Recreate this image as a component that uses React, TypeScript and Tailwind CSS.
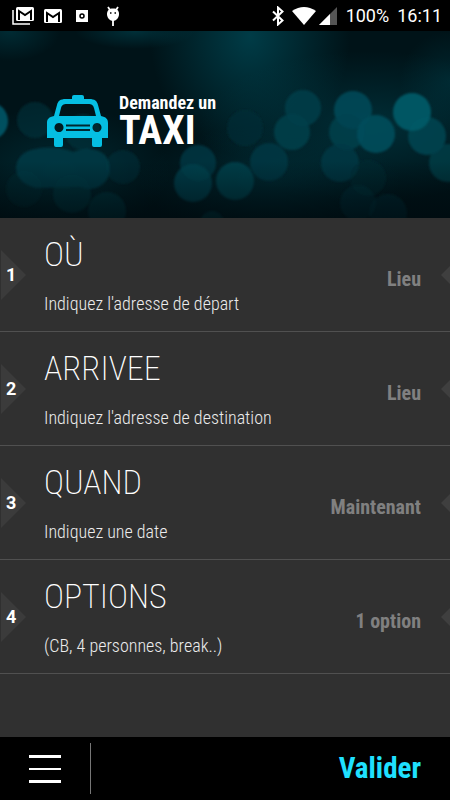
import clsx from "clsx";

const condensed =
  "font-['Roboto_Condensed','Liberation_Sans_Narrow','Liberation_Sans',sans-serif]";

const steps = [
  { title: "OÙ", hint: "Indiquez l'adresse de départ", value: "Lieu" },
  { title: "ARRIVEE", hint: "Indiquez l'adresse de destination", value: "Lieu" },
  { title: "QUAND", hint: "Indiquez une date", value: "Maintenant" },
  { title: "OPTIONS", hint: "(CB, 4 personnes, break..)", value: "1 option" },
];

// cx, cy, radius, colour, opacity
const lights: [number, number, number, string, number][] = [
  [-11, 90, 19, "#006477", 0.75],
  [35, 89, 18, "#003943", 0.5],
  [83, 101, 18, "#003943", 0.5],
  [123, 136, 17, "#003540", 0.45],
  [72, 163, 19, "#003540", 0.6],
  [24, 158, 18, "#002f38", 0.4],
  [107, 180, 19, "#003540", 0.6],
  [198, 132, 18, "#003d49", 0.7],
  [193, 152, 19, "#00424f", 0.8],
  [235, 150, 19, "#004350", 0.8],
  [245, 97, 18, "#002e37", 0.6],
  [269, 131, 19, "#003a45", 0.75],
  [303, 77, 18, "#00414e", 0.75],
  [292, 101, 18, "#003f4b", 0.85],
  [353, 79, 19, "#004b59", 0.85],
  [347, 101, 18, "#004350", 0.75],
  [376, 103, 19, "#004d5b", 0.9],
  [340, 132, 19, "#003a45", 0.75],
  [368, 147, 18, "#002f38", 0.45],
  [358, 172, 18, "#00323b", 0.5],
  [388, 182, 19, "#00323b", 0.5],
  [427, 105, 19, "#004451", 0.85],
  [412, 81, 19, "#005866", 0.95],
  [448, 132, 19, "#00414d", 0.7],
  [212, 192, 12, "#00404b", 0.5],
];

function Bokeh() {
  return (
    <svg
      className="absolute inset-0 size-full"
      viewBox="0 0 450 187"
      preserveAspectRatio="xMidYMid slice"
      aria-hidden="true"
    >
      <defs>
        <radialGradient id="glow">
          <stop offset="0" stopColor="#00434f" />
          <stop offset="1" stopColor="#00434f" stopOpacity="0" />
        </radialGradient>
        <linearGradient id="floor" x1="0" y1="0" x2="0" y2="1">
          <stop offset="0" stopColor="#00080c" stopOpacity="0" />
          <stop offset="1" stopColor="#00080c" stopOpacity="0.6" />
        </linearGradient>
        <filter id="soft">
          <feGaussianBlur stdDeviation="0.8" />
        </filter>
      </defs>
      <rect width="450" height="187" fill="#001318" />
      <ellipse cx="250" cy="5" rx="100" ry="120" fill="url(#glow)" opacity="0.85" />
      <ellipse cx="135" cy="0" rx="60" ry="18" fill="url(#glow)" opacity="0.6" />
      <ellipse cx="10" cy="0" rx="50" ry="30" fill="url(#glow)" opacity="0.5" />
      <ellipse cx="370" cy="95" rx="170" ry="75" fill="url(#glow)" opacity="0.55" />
      <ellipse cx="450" cy="50" rx="50" ry="50" fill="url(#glow)" opacity="0.4" />
      <ellipse cx="270" cy="150" rx="130" ry="55" fill="url(#glow)" opacity="0.4" />
      <ellipse cx="60" cy="140" rx="110" ry="65" fill="url(#glow)" opacity="0.45" />
      <g filter="url(#soft)">
        {lights.map(([cx, cy, r, fill, opacity]) => (
          <circle key={`${cx}-${cy}`} cx={cx} cy={cy} r={r} fill={fill} opacity={opacity} />
        ))}
        <path
          d="M35 118 Q55 114 73 121 Q92 113 105 124 Q114 137 106 150 Q95 162 80 156 L36 157 Q16 152 16 136 Q18 121 35 118Z"
          fill="#003b46"
          opacity="0.85"
        />
      </g>
      <rect y="130" width="450" height="57" fill="url(#floor)" />
    </svg>
  );
}

function TaxiIcon() {
  return (
    <svg className="h-[52px] w-[61px] shrink-0" viewBox="0 0 61 52" aria-hidden="true">
      <path
        fill="#05bfe3"
        fillRule="evenodd"
        d="M27 0h8q2 0 2 2v2h5c6 0 8 2 9 6l3 11c5 1 7 3 7 7v15h-6v7q0 2-2 2h-6q-2 0-2-2v-7H16v7q0 2-2 2H9q-2 0-2-2v-7H0V28c0-4 2-6 7-7l3-11c1-4 3-6 9-6h6V2q0-2 2-2Z
           M20 9c-4 0-5 1-6 4l-2 8h37l-2-8c-1-3-2-4-6-4Z
           M12 28a4.500 4.500 0 1 0 .01 0Z M50 28a4.500 4.500 0 1 0 .01 0Z
           M19 29.500v2h24v-2Z M19 34v2h24v-2Z"
      />
    </svg>
  );
}

function GmailIcon({ stacked = false }: { stacked?: boolean }) {
  return (
    <svg className={stacked ? "h-5 w-[22px]" : "h-5 w-5"} viewBox={stacked ? "0 0 22 20" : "3 0 20 20"} aria-hidden="true">
      {stacked && <path d="M1 4v14h17" fill="none" stroke="#fff" strokeWidth="1.500" />}
      <rect x="4" y={stacked ? 1 : 3} width="18" height="14" rx="1.500" fill="#fff" />
      <path d={stacked ? "M7 14V5l6 4 6-4v9" : "M7 16V7l6 4 6-4v9"} fill="none" stroke="#000" strokeWidth="2" />
    </svg>
  );
}

function StatusBar() {
  return (
    <div className="flex h-[31px] items-center justify-between bg-black pr-2 pl-3 font-[Roboto,sans-serif] text-lg text-white">
      <div className="flex items-center gap-[9px]">
        <GmailIcon stacked />
        <GmailIcon />
        <svg className="ml-1 h-5 w-3" viewBox="0 0 12 20" aria-hidden="true">
          <rect y="4" width="12" height="12" fill="#fff" />
          <circle cx="6" cy="10" r="2" fill="none" stroke="#000" strokeWidth="1.500" />
        </svg>
        <svg className="ml-2 h-5 w-4" viewBox="0 0 16 20" aria-hidden="true">
          <path d="M3 1l2 3M13 1l-2 3M8 14v6" stroke="#fff" strokeWidth="1.800" />
          <path d="M8 2.500c4 0 6 2 6 5.500 0 4-3 7-6 7s-6-3-6-7c0-3.500 2-5.500 6-5.500Z" fill="#fff" />
          <path d="M5 7h1.500M9.500 7H11" stroke="#000" strokeWidth="1.500" />
        </svg>
      </div>
      <div className="flex items-center">
        <svg className="h-5 w-3" viewBox="0 0 12 20" aria-hidden="true">
          <path d="M1 5.500 10.500 14.500 6 18.500v-17l4.500 4L1 14.500" fill="none" stroke="#fff" strokeWidth="2" />
        </svg>
        <svg className="ml-2 h-5 w-6" viewBox="0 0 24 20" aria-hidden="true">
          <path d="M0 5q12-8 24 0L12 19Z" fill="#fff" />
        </svg>
        <svg className="ml-[3px] h-5 w-[18px]" viewBox="0 0 18 20" aria-hidden="true">
          <path d="M18 1v18H0Z" fill="#555" />
          <path d="M11 8v11H0Z" fill="#fff" />
        </svg>
        <span className="ml-[9px]">100%</span>
        <span className="ml-2">16:11</span>
      </div>
    </div>
  );
}

function Step({ index, title, hint, value }: { index: number; title: string; hint: string; value: string }) {
  return (
    <li className="border-b border-[#505050]">
      <button type="button" className="flex h-[113px] w-full items-center text-left">
        <span className="relative flex h-[50px] w-[26px] shrink-0 items-center pl-[6px]">
          <svg className="absolute inset-0 size-full" viewBox="0 0 26 50" aria-hidden="true">
            <path d="M1 0 26 25 1 50Z" fill="#3b3b3b" />
          </svg>
          <span className="relative font-[Roboto,sans-serif] text-lg font-bold text-white">{index}</span>
        </span>
        <span className={clsx("ml-[18px] flex flex-1 flex-col gap-[18px]", condensed)}>
          <span className="text-[34px] leading-10 font-extralight text-white">{title}</span>
          <span className="text-lg leading-6 font-light text-[#ececec]">{hint}</span>
        </span>
        <span className={clsx("pt-2 text-xl font-bold text-[#808080]", condensed)}>{value}</span>
        <svg className="ml-5 h-5 w-[9px] shrink-0" viewBox="0 0 9 20" aria-hidden="true">
          <path d="M9 1v18L0 10Z" fill="#3f3f3f" />
        </svg>
      </button>
    </li>
  );
}

export default function App() {
  return (
    <div className="flex min-h-screen flex-col bg-[#303030]">
      <StatusBar />
      <header className="relative flex h-[187px] items-center overflow-hidden bg-[#001318] pb-[7px] pl-[47px]">
        <Bokeh />
        <div className="relative flex items-center gap-[11px]">
          <TaxiIcon />
          <h1 className={clsx("flex flex-col font-bold text-white", condensed)}>
            <span className="text-lg leading-5">Demandez un</span>
            <span className="text-[40px] leading-9">TAXI</span>
          </h1>
        </div>
      </header>
      <main className="flex-1">
        <ol>
          {steps.map((step, i) => (
            <Step key={step.title} index={i + 1} {...step} />
          ))}
        </ol>
      </main>
      <footer className="flex h-[63px] items-center bg-black pr-[29px]">
        <button type="button" aria-label="Menu" className="flex w-[90px] flex-col items-center gap-[10px]">
          <span className="h-[3px] w-8 bg-white" />
          <span className="h-[2px] w-8 bg-white" />
          <span className="h-[3px] w-8 bg-white" />
        </button>
        <span className="h-[51px] w-px bg-[#777]" />
        <button type="button" className={clsx("ml-auto text-[29px] font-bold text-[#1fe0ff]", condensed)}>
          Valider
        </button>
      </footer>
    </div>
  );
}
